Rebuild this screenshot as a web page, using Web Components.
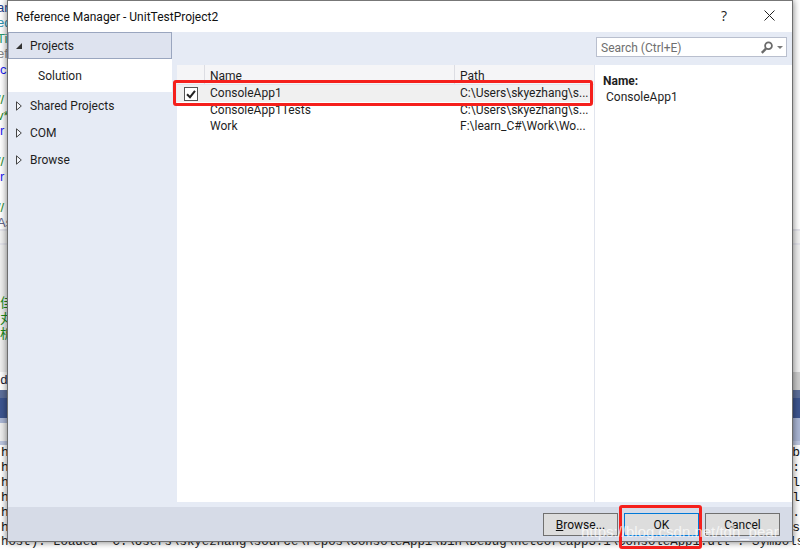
<!DOCTYPE html>
<html>
<head>
<meta charset="utf-8">
<title>Reference Manager</title>
<style>
  html, body { margin: 0; height: 100%; overflow: hidden; background: #fff; }
  body { position: relative; width: 800px; height: 550px; font-family: Roboto, "Open Sans", sans-serif; }
</style>
</head>
<body>
<code-backdrop></code-backdrop>
<ref-dialog heading="Reference Manager - UnitTestProject2">
  <tree-item slot="tree" kind="open" selected>Projects</tree-item>
  <tree-item slot="tree" kind="child">Solution</tree-item>
  <tree-item slot="tree" kind="closed">Shared Projects</tree-item>
  <tree-item slot="tree" kind="closed">COM</tree-item>
  <tree-item slot="tree" kind="closed">Browse</tree-item>

  <ref-row slot="rows" name="ConsoleApp1" path="C:\Users\skyezhang\s..." checked></ref-row>
  <ref-row slot="rows" name="ConsoleApp1Tests" path="C:\Users\skyezhang\s..."></ref-row>
  <ref-row slot="rows" name="Work" path="F:\learn_C#\Work\Wo..."></ref-row>

  <ref-button slot="buttons"><u>B</u>rowse...</ref-button>
  <ref-button slot="buttons" primary style="margin-left:6px">OK</ref-button>
  <ref-button slot="buttons" style="margin-left:6px">Cancel</ref-button>
</ref-dialog>
<red-mark style="left:173px;top:80px;width:420px;height:26px"></red-mark>
<red-mark style="left:619px;top:505px;width:83px;height:44px"></red-mark>
<water-mark>https://blog.csdn.net/tdh_bear</water-mark>

<script>
class CodeBackdrop extends HTMLElement {
  constructor() {
    super();
    this.attachShadow({ mode: "open" });
    const code = [
      ["ar", "#1f3f8f"], ["ed", "#2b91af"], ["Ti", "#2a9a6a"], ["ef", "#888"], ["ic", "#1a1af0"], ["", "#000"],
      ["//", "#2a8a2a"], ["v*", "#2a8a2a"], ["ir", "#1a1af0"], ["", "#000"], ["//", "#2a8a2a"], ["ir", "#1a1af0"], ["", "#000"], ["//", "#2a8a2a"], ["As", "#668"]
    ];
    const rows = code.map(([t, c]) => `<div class="code" style="color:${c}">${t}</div>`).join("");
    const out = [["h", "b"], ["h", "i:"], ["h", "l"], ["h", "l"], ["h", "o."], ["h", "s"]];
    const lines = out.map(([a, b]) => `<div class="out"><span>${a}</span><span>${b}</span></div>`).join("");
    this.shadowRoot.innerHTML = `
      <style>
        :host {
          display: flex;
          flex-direction: column;
          position: absolute;
          inset: 0;
          overflow: hidden;
          background: #f0f0f0;
        }
        .top { height: 229px; flex: none; background: #fff; overflow: hidden; box-sizing: border-box; }
        .code { height: 15.4px; margin-left: -3px; font: 13px/15.4px "Liberation Sans", sans-serif; }
        .sep { height: 16px; flex: none; background: #f1f1f1; border-top: 2px solid #e3e3ea; border-bottom: 2px solid #e3e3ea; box-sizing: border-box; }
        .cjk { height: 127px; flex: none; background: #efefef; box-sizing: border-box; padding-top: 49px; }
        .cjk div { height: 15.5px; font: 13px/15.5px "Noto Sans CJK SC", sans-serif; color: #1a8a1a; }
        .title { height: 18px; flex: none; font: 13px/18px "Liberation Mono", monospace; color: #223; background: linear-gradient(90deg, #fff 8px, #ccc 8px); }
        .band1 { height: 8px; flex: none; background: #5d6f9b; }
        .band2 { height: 20px; flex: none; background: #3d5590; }
        .band3 { height: 5px; flex: none; background: #aab6d4; }
        .band4 { height: 18px; flex: none; background: linear-gradient(90deg, #eee 8px, #aab6d4 8px); }
        .band5 { height: 4px; flex: none; background: #bcc6e0; }
        .outs { flex: 1; background: #fff; }
        .out { height: 15px; display: flex; justify-content: space-between; font: 13px/15px "Liberation Mono", monospace; color: #111; padding-left: 1px; }
        .last { font: 12.4px/15px "Liberation Mono", monospace; white-space: nowrap; margin-left: 1px; color: #222; }
      </style>
      <div class="top">${rows}</div>
      <div class="sep"></div>
      <div class="cjk"><div>佳</div><div>丸</div><div>析</div></div>
      <div class="title">d</div>
      <div class="band1"></div>
      <div class="band2"></div>
      <div class="band3"></div>
      <div class="band4"></div>
      <div class="band5"></div>
      <div class="outs">${lines}<div class="last">host). Loaded 'C:\\Users\\skyezhang\\source\\repos\\ConsoleApp1\\bin\\Debug\\netcoreapp3.1\\ConsoleApp1.dll'. Symbols loaded.</div></div>
    `;
  }
}

class RefDialog extends HTMLElement {
  constructor() {
    super();
    this.attachShadow({ mode: "open" });
    this.shadowRoot.innerHTML = `
      <style>
        :host {
          position: absolute;
          left: 7px;
          top: 0;
          width: 786px;
          height: 542px;
          box-sizing: border-box;
          display: flex;
          flex-direction: column;
          background: #e6ebf5;
          border: 1px solid #6e6e6e;
          border-top-color: #777;
          box-shadow: 0 0 7px rgba(0,0,0,.55);
          color: #1e1e1e;
          font: 12px Roboto, "Open Sans", sans-serif;
        }
        .bar {
          height: 31px;
          flex: none;
          background: #fff;
          display: flex;
          align-items: center;
          padding: 0 0 0 8px;
        }
        .bar .t { flex: 1; font-size: 12px; color: #111; }
        .help { width: 44px; margin-bottom: 2px; text-align: center; font: 14px "Open Sans", sans-serif; color: #222; }
        .close { width: 46px; margin-bottom: 2px; display: flex; justify-content: center; }
        .main { flex: 1; display: flex; min-height: 0; }
        .tree { width: 164px; flex: none; }
        .right { flex: 1; display: flex; flex-direction: column; margin-left: 5px; min-width: 0; }
        .tools { height: 33px; flex: none; display: flex; justify-content: flex-end; align-items: flex-start; padding: 5px 5px 0 0; box-sizing: border-box; }
        .search {
          width: 191px;
          height: 20px;
          box-sizing: border-box;
          background: #fff;
          border: 1px solid #b9bfce;
          display: flex;
          align-items: center;
          padding: 0 2px 0 4px;
          color: #6f6f6f;
          font-size: 12px;
        }
        .search span { flex: 1; padding-top: 1px; }
        .panes { flex: 1; display: flex; background: #fff; margin-bottom: 5px; min-height: 0; }
        .list { width: 417px; flex: none; display: flex; flex-direction: column; }
        .head { height: 19px; flex: none; display: grid; grid-template-columns: 28px 250px 1fr; background: #f5f5f7; border-bottom: 1px solid #e3e4ea; overflow: hidden; }
        .head div { border-right: 1px solid #dcdde3; padding: 1px 0 0 5px; line-height: 20px; }
        .head div:last-child { border-right: 0; }
        .detail { flex: 1; border-left: 1px solid #e1e5ee; padding: 8px 8px; line-height: 16px; }
        .detail b { display: block; font-weight: 700; }
        .detail span { padding-left: 3px; }
        .foot {
          height: 34px;
          flex: none;
          background: #d6dbe7;
          display: flex;
          justify-content: flex-end;
          padding: 6px 12px 0 0;
          box-sizing: border-box;
        }
      </style>
      <div class="bar">
        <div class="t">${this.getAttribute("heading")}</div>
        <div class="help">?</div>
        <div class="close">
          <svg width="11" height="11" viewBox="0 0 11 11"><path d="M.5.5l10 10M10.5.5l-10 10" stroke="#222" fill="none"/></svg>
        </div>
      </div>
      <div class="main">
        <div class="tree"><slot name="tree"></slot></div>
        <div class="right">
          <div class="tools">
            <div class="search">
              <span>Search (Ctrl+E)</span>
              <svg width="24" height="13" viewBox="0 0 24 13">
                <circle cx="8.5" cy="4.8" r="3.4" fill="none" stroke="#6a6a6a" stroke-width="1.8"/>
                <path d="M6 7.6L1.8 11.8" stroke="#6a6a6a" stroke-width="2.4"/>
                <path d="M17 5h6l-3 3z" fill="#7a7a7a"/>
              </svg>
            </div>
          </div>
          <div class="panes">
            <div class="list">
              <div class="head"><div></div><div>Name</div><div>Path</div></div>
              <slot name="rows"></slot>
            </div>
            <div class="detail"><b>Name:</b><span>ConsoleApp1</span></div>
          </div>
        </div>
      </div>
      <div class="foot"><slot name="buttons"></slot></div>
    `;
  }
}

class TreeItem extends HTMLElement {
  constructor() {
    super();
    this.attachShadow({ mode: "open" });
    const kind = this.getAttribute("kind");
    let arrow = "";
    if (kind === "open") arrow = `<svg width="8" height="8" viewBox="0 0 8 8"><path d="M7 1v6H1z" fill="#333"/></svg>`;
    if (kind === "closed") arrow = `<svg width="8" height="10" viewBox="0 0 8 10"><path d="M1.5 .8l4.8 4.2-4.8 4.2z" fill="#f4f6fb" stroke="#444"/></svg>`;
    this.shadowRoot.innerHTML = `
      <style>
        :host { display: flex; align-items: center; height: 27px; box-sizing: border-box; padding-left: 7px; font-size: 12px; color: #1e1e1e; }
        :host([selected]) { background: #dee3ef; border: 1px solid #9aa6bf; padding-left: 6px; }
        :host([kind="child"]) { background: #fff; height: 33px; padding-left: 30px; }
        .a { width: 8px; display: flex; margin-right: 7px; }
        :host([kind="child"]) .a { display: none; }
      </style>
      <span class="a">${arrow}</span><slot></slot>
    `;
  }
}

class RefRow extends HTMLElement {
  constructor() {
    super();
    this.attachShadow({ mode: "open" });
    const box = this.hasAttribute("checked")
      ? `<svg width="14" height="14" viewBox="0 0 14 14"><rect x=".5" y=".5" width="13" height="13" fill="#fff" stroke="#555"/><path d="M3 7.2l3 3 5-6.4" fill="none" stroke="#222" stroke-width="2"/></svg>`
      : "";
    this.shadowRoot.innerHTML = `
      <style>
        :host { display: grid; grid-template-columns: 28px 250px 1fr; height: 16px; line-height: 16px; font-size: 12px; white-space: nowrap; }
        :host([checked]) { background: #f0f0f0; height: 17px; line-height: 17px; }
        .c { display: flex; justify-content: center; align-items: center; }
        .n, .p { padding-left: 5px; overflow: hidden; }
      </style>
      <div class="c">${box}</div>
      <div class="n">${this.getAttribute("name")}</div>
      <div class="p">${this.getAttribute("path")}</div>
    `;
  }
}

class RefButton extends HTMLElement {
  constructor() {
    super();
    this.attachShadow({ mode: "open" });
    this.shadowRoot.innerHTML = `
      <style>
        :host { display: inline-flex; align-items: center; justify-content: center; width: 75px; height: 23px; box-sizing: border-box; background: #dddddd; border: 1px solid #707070; font-size: 12px; color: #111; vertical-align: top; }
        :host([primary]) { border-color: #0078d7; }
      </style>
      <slot></slot>
    `;
  }
}

class RedMark extends HTMLElement {
  constructor() {
    super();
    this.attachShadow({ mode: "open" });
    this.shadowRoot.innerHTML = `
      <style>
        :host { position: absolute; box-sizing: border-box; border: 3px solid #f5201c; border-radius: 3px; }
      </style>
    `;
  }
}

class WaterMark extends HTMLElement {
  constructor() {
    super();
    this.attachShadow({ mode: "open" });
    this.shadowRoot.innerHTML = `
      <style>
        :host { position: absolute; left: 581px; top: 523px; font: 15px "Liberation Sans", sans-serif; color: rgba(255,255,255,.72); white-space: nowrap; }
      </style>
      <slot></slot>
    `;
  }
}

customElements.define("code-backdrop", CodeBackdrop);
customElements.define("ref-dialog", RefDialog);
customElements.define("tree-item", TreeItem);
customElements.define("ref-row", RefRow);
customElements.define("ref-button", RefButton);
customElements.define("red-mark", RedMark);
customElements.define("water-mark", WaterMark);
</script>
</body>
</html>
